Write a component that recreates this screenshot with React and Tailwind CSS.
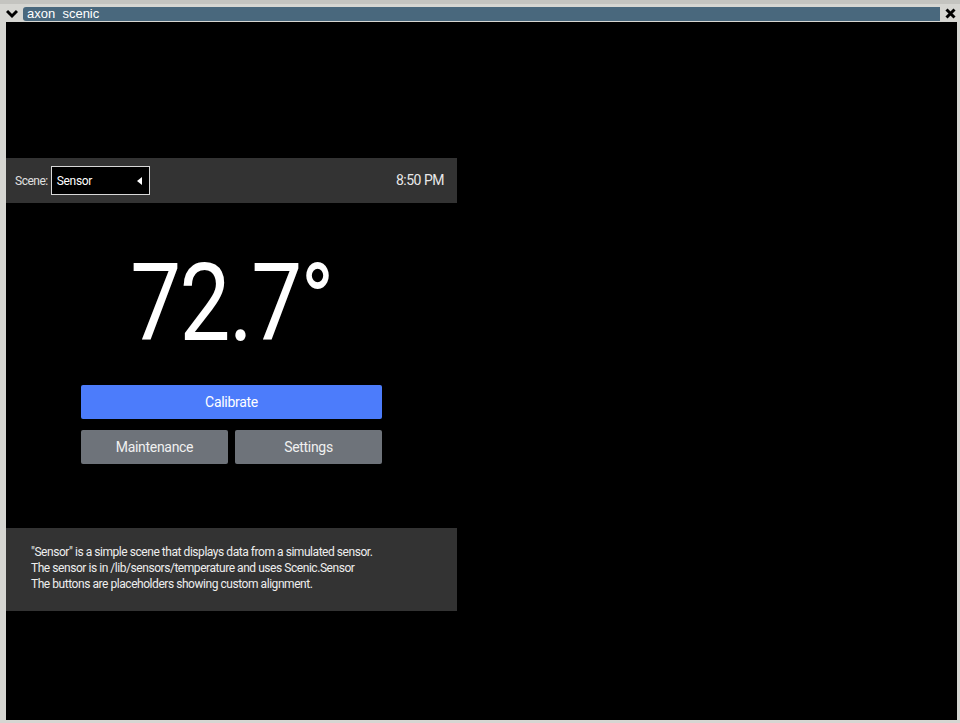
export default function App() {
  return (
    <div className="w-[960px] h-[723px] bg-[#d6d6d2] flex flex-col overflow-hidden" style={{ fontFamily: "Roboto, sans-serif" }}>
      {/* window frame title */}
      <div className="h-[4px] bg-[#c4c4c0]" />
      <div className="h-[18px] flex items-start pt-[3px]">
        <div className="w-[23px] flex justify-center pt-[2px]">
          <svg width="12" height="10" viewBox="0 0 12 10">
            <path d="M1 2 L6 7 L11 2" stroke="#000" strokeWidth="3" fill="none" />
          </svg>
        </div>
        <div className="w-[917px] h-[14px] bg-[#49687d] rounded-l-[3px] text-white text-[13px] leading-[14px] pl-[4px]" style={{ fontFamily: '"Liberation Sans", sans-serif' }}>
          axon&nbsp; scenic
        </div>
        <div className="flex-1 flex justify-center pt-[1px]">
          <svg width="11" height="11" viewBox="0 0 11 11">
            <path d="M1.5 1.5 L9.5 9.5 M9.5 1.5 L1.5 9.5" stroke="#000" strokeWidth="3" />
          </svg>
        </div>
      </div>
      <div className="ml-[6px] w-[951px] h-[698px] bg-black flex flex-col">
        <div className="mt-[136px] w-[451px] h-[45px] bg-[#333333] flex items-center pl-[9px] pr-[13px]">
          <span className="text-[#e0e0e0] text-[12px] tracking-[-0.5px] mr-[3px]">Scene:</span>
          <div className="w-[99px] h-[29px] border border-[#d8d8d8] bg-black flex items-center justify-between pl-[5px] pr-[7px]">
            <span className="text-white text-[12px] tracking-[-0.3px]">Sensor</span>
            <svg width="5" height="8" viewBox="0 0 5 8">
              <path d="M5 0 L0 4 L5 8 Z" fill="#fff" />
            </svg>
          </div>
          <span className="ml-auto text-[#e8e8e8] text-[14px] tracking-[-0.5px]">8:50 PM</span>
        </div>
        <div className="w-[451px] flex justify-center mt-[40px]">
          <span className="inline-block text-white text-[108px] leading-[120px] font-normal tracking-[-2px] scale-x-[0.84]">72.7°</span>
        </div>
        <div className="w-[301px] ml-[75px] mt-[22px] flex flex-col gap-[11px]">
          <div className="h-[34px] bg-[#4c7cfb] rounded-[2px] flex items-center justify-center text-white text-[14px] tracking-[-0.3px]">Calibrate</div>
          <div className="flex gap-[7px]">
            <div className="w-[147px] h-[34px] bg-[#6e737a] rounded-[2px] flex items-center justify-center text-[#f0f0f0] text-[14px] tracking-[-0.3px]">Maintenance</div>
            <div className="w-[147px] h-[34px] bg-[#6e737a] rounded-[2px] flex items-center justify-center text-[#f0f0f0] text-[14px] tracking-[-0.3px]">Settings</div>
          </div>
        </div>
        <div className="mt-[64px] w-[451px] h-[83px] bg-[#333333] pl-[25px] pt-[16px] text-[#eeeeee] text-[12px] leading-[16px] tracking-[-0.45px]">
          <div>"Sensor" is a simple scene that displays data from a simulated sensor.</div>
          <div>The sensor is in /lib/sensors/temperature and uses Scenic.Sensor</div>
          <div>The buttons are placeholders showing custom alignment.</div>
        </div>
      </div>
    </div>
  );
}
